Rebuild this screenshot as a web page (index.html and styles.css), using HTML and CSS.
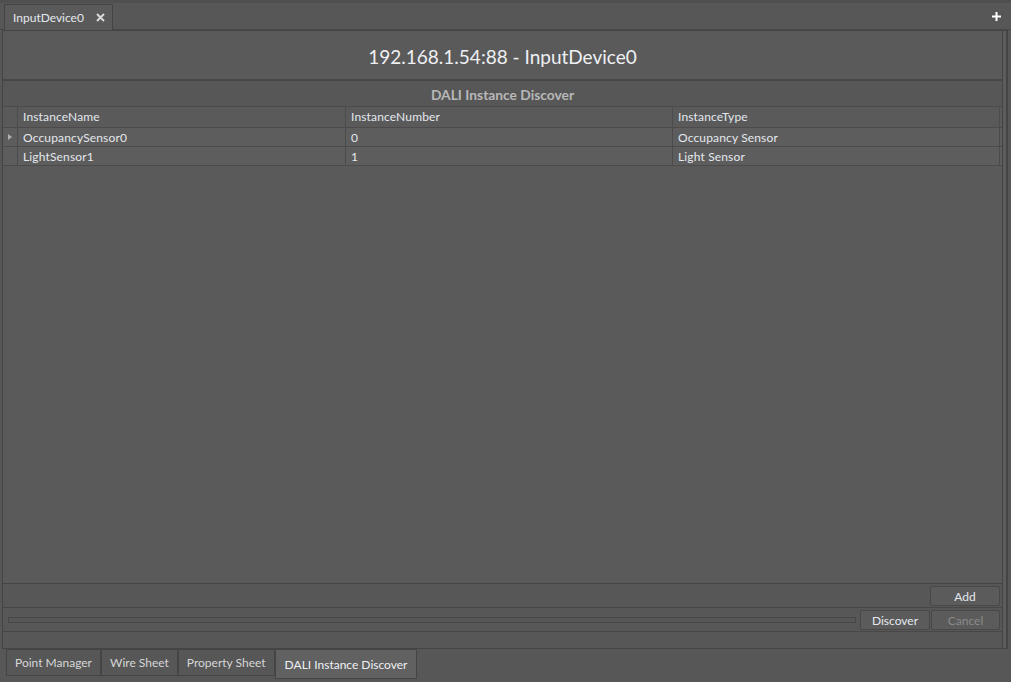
FILE: index.html
```html
<!DOCTYPE html>
<html lang="en">
<head>
    <meta charset="UTF-8">
    <title>InputDevice0</title>
    <link rel="stylesheet" href="styles.css">
</head>
<body>
    <div class="tabstrip">
        <div class="doc-tab">
            <span>InputDevice0</span>
            <svg class="close" width="9" height="9" viewBox="0 0 9 9"><path d="M1 1L8 8M8 1L1 8" stroke="#d8d8d8" stroke-width="2"/></svg>
        </div>
        <svg class="plus" width="9" height="9" viewBox="0 0 9 9"><path d="M4.5 0V9M0 4.5H9" stroke="#fff" stroke-width="2"/></svg>
    </div>

    <div class="frame">
        <div class="inner">
            <div class="title">192.168.1.54:88 - InputDevice0</div>
            <div class="panel-head">DALI Instance Discover</div>
            <div class="grid">
                <div class="row head">
                    <div class="gutter"></div>
                    <div class="cell">InstanceName</div>
                    <div class="cell">InstanceNumber</div>
                    <div class="cell">InstanceType</div>
                </div>
                <div class="row">
                    <div class="gutter"><span class="arrow"></span></div>
                    <div class="cell">OccupancySensor0</div>
                    <div class="cell">0</div>
                    <div class="cell">Occupancy Sensor</div>
                </div>
                <div class="row">
                    <div class="gutter"></div>
                    <div class="cell">LightSensor1</div>
                    <div class="cell">1</div>
                    <div class="cell">Light Sensor</div>
                </div>
            </div>
            <div class="bar">
                <button class="btn">Add</button>
            </div>
            <div class="bar">
                <div class="progress"></div>
                <button class="btn">Discover</button>
                <button class="btn narrow" disabled>Cancel</button>
            </div>
            <div class="bar empty"></div>
        </div>
        <div class="side"></div>
    </div>

    <div class="view-tabs">
        <div class="view-tab">Point Manager</div>
        <div class="view-tab">Wire Sheet</div>
        <div class="view-tab">Property Sheet</div>
        <div class="view-tab active">DALI Instance Discover</div>
    </div>
</body>
</html>
```

FILE: styles.css
```css
* {
    box-sizing: border-box;
}
html, body {
    height: 100%;
}
body {
    margin: 0;
    background: #575757;
    font-family: 'Lato', 'Open Sans', sans-serif;
    font-size: 12px;
    color: #e4e8ee;
    display: flex;
    flex-direction: column;
    overflow: hidden;
}
.tabstrip {
    height: 30px;
    flex: none;
    border-top: 3px solid #4f4f4f;
    border-bottom: 1px solid #474747;
    display: flex;
    align-items: flex-end;
    padding-left: 4px;
    padding-right: 10px;
}
.doc-tab {
    height: 26px;
    width: 109px;
    border: 1px solid #444;
    border-bottom: none;
    background: #5a5a5a;
    display: flex;
    align-items: center;
    padding-left: 8px;
    gap: 12px;
    font-size: 12px;
    margin-bottom: -1px;
}
.plus {
    margin-left: auto;
    align-self: center;
}
.frame {
    height: 619px;
    flex: none;
    margin: 0 3px 0 2px;
    border: 1px solid #444;
    display: flex;
}
.inner {
    flex: 1;
    display: flex;
    flex-direction: column;
    border-right: 1px solid #444;
}
.side {
    width: 4px;
    background: #5c5c5c;
    border-right: 1px solid #474747;
}
.title {
    height: 50px;
    flex: none;
    display: flex;
    align-items: center;
    justify-content: center;
    padding-top: 2px;
    font-size: 19px;
    color: #eef0f4;
    background: #5a5a5a;
    border-bottom: 2px solid #474747;
}
.panel-head {
    height: 26px;
    flex: none;
    display: flex;
    align-items: center;
    justify-content: center;
    padding-top: 1px;
    font-weight: bold;
    font-size: 13.8px;
    color: #b8b8b8;
    background: #575757;
    border-bottom: 1px solid #4b4b4b;
}
.grid {
    flex: 1;
    background: #5a5a5a;
    border-bottom: 1px solid #444;
}
.row {
    display: grid;
    grid-template-columns: 15px 328px 327px 327px;
    height: 19px;
    border-bottom: 1px solid #4b4b4b;
    background: #5d5d5d;
}
.row.head {
    height: 21px;
    background: #5a5a5a;
}
.row.head .cell {
    padding-bottom: 2px;
}
.gutter {
    border-right: 1px solid #4b4b4b;
    display: flex;
    align-items: center;
    justify-content: center;
}
.arrow {
    width: 0;
    height: 0;
    border-left: 4px solid #b0b0b0;
    border-top: 3px solid transparent;
    border-bottom: 3px solid transparent;
}
.cell {
    border-right: 1px solid #4b4b4b;
    padding-left: 5px;
    display: flex;
    align-items: center;
    white-space: nowrap;
    letter-spacing: 0.15px;
}
.bar {
    height: 24px;
    flex: none;
    display: flex;
    align-items: center;
    justify-content: flex-end;
    gap: 1px;
    padding: 1px 2px 0 5px;
    border-bottom: 1px solid #474747;
}
.bar.empty {
    height: 16px;
    border-bottom: none;
}
.progress {
    flex: 1;
    height: 6px;
    border: 1px solid #474747;
    margin-right: 3px;
}
.btn {
    width: 70px;
    height: 20px;
    border: 1px solid #484848;
    border-radius: 2px;
    background: #5b5b5b;
    color: #e4e8ee;
    font-family: inherit;
    font-size: 12px;
    padding: 0;
}
.btn.narrow {
    width: 69px;
}
.btn:disabled {
    color: #8a8a8a;
}
.view-tabs {
    display: flex;
    padding-left: 6px;
}
.view-tab {
    height: 27px;
    border: 1px solid #454545;
    padding: 0 8px;
    display: flex;
    align-items: center;
    color: #d6d6d6;
    background: #575757;
}
.view-tab.active {
    height: 30px;
    background: #616161;
    color: #eef0f4;
    padding: 0 9px;
}
```
